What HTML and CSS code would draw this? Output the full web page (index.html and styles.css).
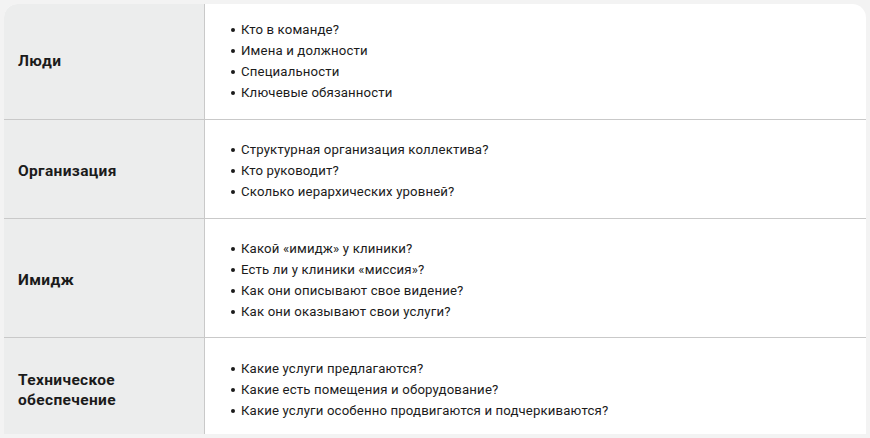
FILE: index.html
```html
<!DOCTYPE html>
<html lang="ru">
<head>
<meta charset="utf-8">
<link rel="stylesheet" href="styles.css">
</head>
<body>
<div class="card">
  <div class="row r1">
    <div class="label">Люди</div>
    <div class="cell">
      <ul>
        <li>Кто в команде?</li>
        <li>Имена и должности</li>
        <li>Специальности</li>
        <li>Ключевые обязанности</li>
      </ul>
    </div>
  </div>
  <div class="row r2">
    <div class="label">Организация</div>
    <div class="cell">
      <ul>
        <li>Структурная организация коллектива?</li>
        <li>Кто руководит?</li>
        <li>Сколько иерархических уровней?</li>
      </ul>
    </div>
  </div>
  <div class="row r3">
    <div class="label">Имидж</div>
    <div class="cell">
      <ul>
        <li>Какой «имидж» у клиники?</li>
        <li>Есть ли у клиники «миссия»?</li>
        <li>Как они описывают свое видение?</li>
        <li>Как они оказывают свои услуги?</li>
      </ul>
    </div>
  </div>
  <div class="row r4">
    <div class="label">Техническое<br>обеспечение</div>
    <div class="cell">
      <ul>
        <li>Какие услуги предлагаются?</li>
        <li>Какие есть помещения и оборудование?</li>
        <li>Какие услуги особенно продвигаются и подчеркиваются?</li>
      </ul>
    </div>
  </div>
</div>
</body>
</html>
```
FILE: styles.css
```css
html, body {
  margin: 0;
  padding: 0;
  background: #f3f3f3;
}
body {
  padding: 4px 4px 0 4px;
  height: 438px;
  box-sizing: border-box;
  overflow: hidden;
  font-family: Roboto, "Noto Sans", sans-serif;
  color: #1b1b1b;
}
.card {
  background: #ffffff;
  border-radius: 14px 14px 0 0;
  overflow: hidden;
  height: 430px;
}
.row {
  display: grid;
  grid-template-columns: 201px 1fr;
  border-bottom: 1px solid #c9c9c9;
  box-sizing: border-box;
}
.r1 { height: 116px; }
.r2 { height: 99px; }
.r3 { height: 119px; }
.r4 { height: 96px; border-bottom: none; }
.label {
  background: #eceded;
  border-right: 1px solid #c9c9c9;
  display: flex;
  align-items: center;
  padding-left: 14px;
  font-size: 15.5px;
  font-weight: 700;
  letter-spacing: 0.35px;
  line-height: 20px;
  box-sizing: border-box;
}
.cell {
  display: flex;
  align-items: center;
  padding-left: 26px;
  box-sizing: border-box;
}
.r1 .label { padding-bottom: 2px; }
.r1 .cell { padding-bottom: 2px; }
.r2 .label { padding-top: 4px; }
.r2 .cell { padding-top: 2px; }
.r3 .label { padding-top: 4px; }
.r3 .cell { padding-top: 4px; }
.r4 .label { padding-top: 8px; }
.r4 .cell { padding-top: 6px; }
ul {
  list-style: none;
  margin: 0;
  padding: 0;
}
li {
  font-size: 13.2px;
  letter-spacing: 0.15px;
  line-height: 21px;
  position: relative;
  padding-left: 10px;
}
li::before {
  content: "";
  position: absolute;
  left: 0;
  top: 9px;
  width: 4px;
  height: 4px;
  border-radius: 50%;
  background: #1b1b1b;
}
```
